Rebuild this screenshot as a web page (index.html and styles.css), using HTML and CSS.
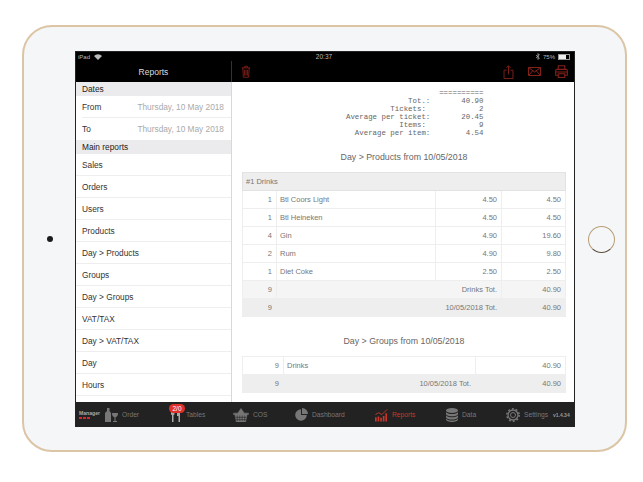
FILE: index.html
```html
<!DOCTYPE html>
<html lang="en">
<head>
    <meta charset="UTF-8">
    <title>Reports</title>
    <link rel="stylesheet" href="styles.css">
</head>
<body>
    <div class="tablet">
        <div class="camera"></div>
        <div class="screen">
            <div class="status-bar">
                <div class="status-left">iPad
                    <svg width="8" height="6" viewBox="0 0 8 6"><path d="M0 2a5.500 5.500 0 0 1 8 0L4 6z" fill="#bbb"/></svg>
                </div>
                <div class="status-time">20:37</div>
                <div class="status-right">
                    <svg width="4" height="7" viewBox="0 0 4 7"><path d="M0 2l3.400 3L2 6.500V.5L3.400 2 0 5" fill="none" stroke="#bbb" stroke-width=".7"/></svg>
                    <span>75%</span>
                    <span class="battery"><span class="battery-level"></span></span>
                </div>
            </div>
            <div class="nav-bar">
                <div class="nav-title">Reports</div>
                <div class="nav-tools">
                    <svg class="nav-icon" width="10" height="13" viewBox="0 0 11 14"><path d="M1 3h9M4 3V1.300h3V3M2 3l.6 10.300h5.800L9 3M4 5v6.500M5.500 5v6.500M7 5v6.500" /></svg>
                    <div class="nav-right">
                        <svg class="nav-icon" width="11" height="14" viewBox="0 0 11 15"><path d="M3.500 5.500H.7v9h9.600v-9H7.500M5.500 10V1M3.300 3l2.200-2.200L7.700 3"/></svg>
                        <svg class="nav-icon" width="13" height="9" viewBox="0 0 13 9"><path d="M.5.500h12v8H.5zM.5.500l6 4.500 6-4.500M.5 8.500l4.500-5M12.500 8.500L8 3.500"/></svg>
                        <svg class="nav-icon" width="13" height="13" viewBox="0 0 12 12"><path d="M3 4V.7h6V4M3 9.500H.6V5.500A1.500 1.500 0 0 1 2 4h8a1.500 1.500 0 0 1 1.400 1.500v4H9M3 8h6v3.500H3zM.6 6.500h10.800"/></svg>
                    </div>
                </div>
            </div>
            <div class="content">
                <aside class="sidebar">
                    <div class="section-head">Dates</div>
                    <div class="date-row"><span>From</span><span class="date-value">Thursday, 10 May 2018</span></div>
                    <div class="date-row last"><span>To</span><span class="date-value">Thursday, 10 May 2018</span></div>
                    <div class="section-head">Main reports</div>
                    <div class="menu-row">Sales</div>
                    <div class="menu-row">Orders</div>
                    <div class="menu-row">Users</div>
                    <div class="menu-row">Products</div>
                    <div class="menu-row">Day &gt; Products</div>
                    <div class="menu-row">Groups</div>
                    <div class="menu-row">Day &gt; Groups</div>
                    <div class="menu-row">VAT/TAX</div>
                    <div class="menu-row">Day &gt; VAT/TAX</div>
                    <div class="menu-row">Day</div>
                    <div class="menu-row">Hours</div>
                </aside>
                <main class="report">
<pre class="receipt">                     ==========
              Tot.:       40.90
          Tickets:            2
Average per ticket:       20.45
            Items:            9
  Average per item:        4.54</pre>
                    <h2 class="report-title">Day &gt; Products from 10/05/2018</h2>
                    <table class="report-table">
                        <colgroup><col class="col-qty"><col><col class="col-price"><col class="col-total"></colgroup>
                        <tr class="group-row"><td colspan="4">#1 Drinks</td></tr>
                        <tr><td class="num">1</td><td>Btl Coors Light</td><td class="num">4.50</td><td class="num">4.50</td></tr>
                        <tr><td class="num">1</td><td>Btl Heineken</td><td class="num">4.50</td><td class="num">4.50</td></tr>
                        <tr><td class="num">4</td><td>Gin</td><td class="num">4.90</td><td class="num">19.60</td></tr>
                        <tr><td class="num">2</td><td>Rum</td><td class="num">4.90</td><td class="num">9.80</td></tr>
                        <tr><td class="num">1</td><td>Diet Coke</td><td class="num">2.50</td><td class="num">2.50</td></tr>
                        <tr class="sub-row"><td class="num">9</td><td class="num" colspan="2">Drinks Tot.</td><td class="num">40.90</td></tr>
                        <tr class="total-row"><td class="num">9</td><td class="num" colspan="2">10/05/2018 Tot.</td><td class="num">40.90</td></tr>
                    </table>
                    <h2 class="report-title second">Day &gt; Groups from 10/05/2018</h2>
                    <table class="report-table">
                        <colgroup><col class="col-group-qty"><col><col class="col-group-total"></colgroup>
                        <tr><td class="num">9</td><td>Drinks</td><td class="num">40.90</td></tr>
                        <tr class="total-row"><td class="num">9</td><td class="num">10/05/2018 Tot.</td><td class="num">40.90</td></tr>
                    </table>
                </main>
            </div>
            <nav class="tab-bar">
                <div class="manager">Manager<div class="dots"><i></i><i></i><i></i></div></div>
                <div class="tab">
                    <svg width="13" height="14" viewBox="0 0 13 14"><path d="M2 0h2.500v3L6 5v9H0V5l2-2zM7 5h6c0 2.500-1 4-2.500 4.200V13H12v1H8v-1h1.500V9.200C8 9 7 7.500 7 5z" fill="#777"/></svg>
                    <span>Order</span>
                </div>
                <div class="tab tab-tables">
                    <span class="badge">2/0</span>
                    <svg width="9" height="14" viewBox="0 0 9 14"><path d="M0 0v6a1 1 0 0 0 1 1v7h1.500V7a1 1 0 0 0 1-1V0zM6 0h3v14H7.500V8H6z" fill="#aaa"/></svg>
                    <span>Tables</span>
                </div>
                <div class="tab">
                    <svg width="16" height="14" viewBox="0 0 16 15"><path d="M0 5.500h16v1.500H0zM1.500 7h13l-1.500 8H3zM4.500 5.500L8 .5l3.500 5" fill="#777" stroke="#777" stroke-width=".6" fill-rule="evenodd"/><path d="M4 8v6M6.700 8v6M9.300 8v6M12 8v6M2 10h12M2 12.500h12" stroke="#222" stroke-width=".6"/></svg>
                    <span>COS</span>
                </div>
                <div class="tab">
                    <svg width="13" height="13" viewBox="0 0 13 13"><path d="M6 1.200A5.800 5.800 0 1 0 11.800 7H6zM7 0v6h6a6 6 0 0 0-6-6z" fill="#777"/></svg>
                    <span>Dashboard</span>
                </div>
                <div class="tab active">
                    <svg width="13" height="14" viewBox="0 0 14 14"><path d="M0 9.500h1.800V14H0zM2.800 8.500h1.800V14H2.800zM5.600 10h1.800v4H5.600zM8.400 8h1.800v6H8.400zM11.200 5h1.800v9h-1.800z" fill="#c8372a"/><path d="M.5 6.500l3.500-2 3.500 2L13 1" fill="none" stroke="#c8372a"/></svg>
                    <span>Reports</span>
                </div>
                <div class="tab">
                    <svg width="12" height="14" viewBox="0 0 12 14"><ellipse cx="6" cy="2.500" rx="6" ry="2.500" fill="#777"/><path d="M0 4c1 1.500 3 2 6 2s5-.5 6-2v2.200c-1 1.500-3 2-6 2s-5-.5-6-2zM0 7.200c1 1.500 3 2 6 2s5-.5 6-2v2.300c-1 1.500-3 2-6 2s-5-.5-6-2zM0 10.500c1 1.500 3 2 6 2s5-.5 6-2v1c0 1.500-3 2.500-6 2.500s-6-1-6-2.500z" fill="#777"/></svg>
                    <span>Data</span>
                </div>
                <div class="tab">
                    <svg width="14" height="14" viewBox="0 0 14 14"><circle cx="7" cy="7" r="5" fill="none" stroke="#777" stroke-width="1.300"/><circle cx="7" cy="7" r="2.500" fill="none" stroke="#777" stroke-width="1"/><circle cx="7" cy="7" r="6.200" fill="none" stroke="#777" stroke-width="1.500" stroke-dasharray="1.900 2"/></svg>
                    <span>Settings</span>
                </div>
                <div class="version">v1.4.34</div>
            </nav>
        </div>
        <div class="home-button"></div>
    </div>
</body>
</html>
```

FILE: styles.css
```css
body {
    margin: 0;
    background: #fff;
    font-family: "Liberation Sans", Arial, sans-serif;
    overflow: hidden;
}
.tablet {
    box-sizing: border-box;
    width: 605px;
    height: 427px;
    margin: 25px 0 0 22px;
    padding-top: 1px;
    display: grid;
    grid-template-columns: 51px 500px 1fr;
    align-items: center;
    justify-items: center;
    background: #f5f6f8;
    border: 2px solid #dbc5a5;
    border-radius: 30px;
}
.camera {
    width: 6px;
    height: 6px;
    border-radius: 50%;
    background: #1c1c20;
}
.home-button {
    box-sizing: border-box;
    width: 27px;
    height: 27px;
    margin-left: 2px;
    border: 1.500px solid #b89f76;
    border-bottom-color: #5f5040;
    border-radius: 50%;
}
.screen {
    box-sizing: border-box;
    width: 500px;
    height: 376px;
    display: flex;
    flex-direction: column;
    border: 1px solid #222;
    background: #fff;
    overflow: hidden;
}

/* status + nav */
.status-bar {
    height: 9px;
    flex: none;
    display: grid;
    grid-template-columns: 1fr auto 1fr;
    align-items: center;
    padding: 0 4px 0 2px;
    background: #000;
    color: #bbb;
    font-size: 6px;
}
.status-left {
    display: flex;
    align-items: center;
    gap: 4px;
}
.status-time {
    font-size: 6.500px;
}
.status-right {
    display: flex;
    justify-content: flex-end;
    align-items: center;
    gap: 3px;
}
.battery {
    width: 9px;
    height: 4px;
    padding: 0 1px 0 0;
    border: 1px solid #999;
    display: block;
}
.battery-level {
    display: block;
    width: 7px;
    height: 4px;
    background: #eee;
}
.nav-bar {
    height: 21px;
    flex: none;
    display: flex;
    background: #000;
}
.nav-title {
    width: 156px;
    flex: none;
    box-sizing: border-box;
    padding-top: 2px;
    border-right: 1px solid #333;
    color: #ddd;
    font-size: 8.500px;
    text-align: center;
    line-height: 18px;
}
.nav-tools {
    flex: 1;
    display: flex;
    justify-content: space-between;
    align-items: center;
    padding: 0 6px 0 9px;
}
.nav-right {
    display: flex;
    align-items: center;
    gap: 14px;
}
.nav-icon {
    fill: none;
    stroke: #84201a;
    stroke-width: 1;
}

/* sidebar */
.content {
    flex: 1;
    min-height: 0;
    display: flex;
}
.sidebar {
    width: 156px;
    flex: none;
    box-sizing: border-box;
    border-right: 1px solid #d8d8d8;
    color: #333;
    font-size: 8.300px;
}
.section-head {
    height: 14px;
    padding-left: 6px;
    background: #ebebed;
    line-height: 14px;
    color: #222;
}
.date-row {
    height: 21px;
    margin-left: 6px;
    padding-right: 7px;
    display: flex;
    justify-content: space-between;
    align-items: center;
    border-bottom: 1px solid #eee;
}
.date-row.last {
    border-bottom: 0;
    height: 22px;
}
.date-value {
    color: #aaa;
}
.menu-row {
    box-sizing: border-box;
    height: 22px;
    padding-left: 6px;
    line-height: 22px;
    border-bottom: 1px solid #eee;
}

/* report */
.report {
    flex: 1;
    min-width: 0;
    padding: 7px 8px 0 10px;
    color: #777;
    overflow: hidden;
}
.receipt {
    margin: 0 0 0 104px;
    font-family: "Liberation Mono", "Courier New", monospace;
    font-size: 7.400px;
    line-height: 8.100px;
    color: #666;
}
.report-title {
    margin: 13px 0 9px;
    font-size: 8.800px;
    font-weight: 400;
    line-height: 12px;
    text-align: center;
    color: #666;
}
.report-title.second {
    margin: 18px 0 9px;
}
.report-table {
    width: 324px;
    table-layout: fixed;
    border-collapse: collapse;
    border: 1px solid #e2e2e2;
    font-size: 7.500px;
}
.report-table td {
    height: 17px;
    padding: 0 4px 0 3px;
    border: 1px solid #eee;
}
.col-qty {
    width: 34px;
}
.col-price {
    width: 66px;
}
.col-total {
    width: 64px;
}
.col-group-qty {
    width: 41px;
}
.col-group-total {
    width: 90px;
}
.report-table .num {
    text-align: right;
}
.group-row td {
    background: #eeeeee;
    border-color: #e2e2e2;
}
.sub-row td {
    background: #f5f5f5;
}
.total-row td {
    background: #eeeeee;
}

/* tab bar */
.tab-bar {
    height: 24px;
    flex: none;
    box-sizing: border-box;
    padding: 1px 0 0 3px;
    display: grid;
    grid-template-columns: 26px 66px 62px 62px 80px 71px 60px 47px 1fr;
    align-items: center;
    background: #222;
    color: #777;
    font-size: 6.700px;
}
.manager {
    font-size: 5.100px;
    font-weight: 700;
    color: #aaa;
}
.dots {
    display: flex;
    gap: 1px;
    margin-top: 1px;
}
.dots i {
    width: 3px;
    height: 2px;
    background: #e0242c;
}
.tab {
    position: relative;
    display: flex;
    align-items: center;
    gap: 4px;
}
.tab-tables {
    gap: 6px;
}
.active {
    color: #c8372a;
}
.badge {
    position: absolute;
    top: -4px;
    left: -2px;
    width: 16px;
    height: 9px;
    border-radius: 5px;
    background: #e0302a;
    color: #fff;
    font-size: 6.500px;
    line-height: 9px;
    text-align: center;
}
.version {
    font-size: 5px;
    font-weight: 700;
    color: #999;
}
```
